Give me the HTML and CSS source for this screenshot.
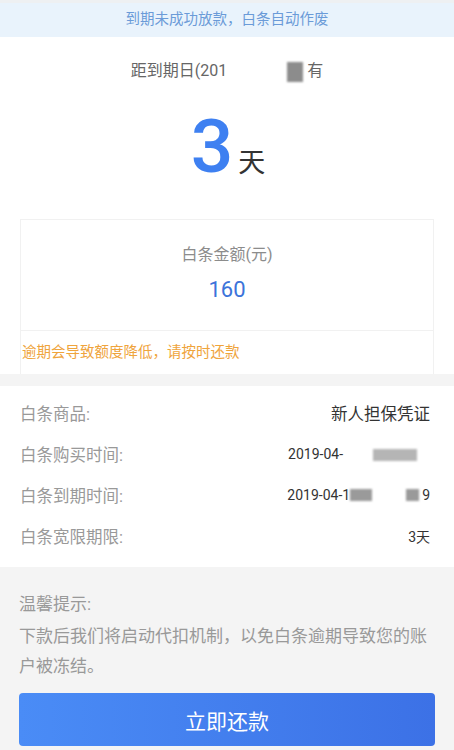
FILE: index.html
```html
<!DOCTYPE html>
<html lang="zh">
<head>
<meta charset="utf-8">
<title>白条详情</title>
<link rel="stylesheet" href="styles.css">
</head>
<body>
<div class="topline"></div>
<div class="banner">到期未成功放款，白条自动作废</div>
<section class="main">
  <div class="due">距到期日(201<span class="redact redact-title"><span class="blk blk-title"></span></span>有</div>
  <div class="days"><span class="num">3</span><span class="unit">天</span></div>
  <div class="card">
    <div class="amount">
      <div class="amount-label">白条金额(元)</div>
      <div class="amount-value">160</div>
    </div>
    <div class="warn">逾期会导致额度降低，请按时还款</div>
  </div>
</section>
<section class="list">
  <div class="row"><span class="label">白条商品:</span><span class="value big">新人担保凭证</span></div>
  <div class="row"><span class="label">白条购买时间:</span><span class="value">2019-04-<span class="redact redact-a"><span class="blk blk-a"></span></span></span></div>
  <div class="row"><span class="label">白条到期时间:</span><span class="value">2019-04-1<span class="redact redact-b"><span class="blk blk-b1"></span><span class="blk blk-b2"></span></span>9</span></div>
  <div class="row"><span class="label">白条宽限期限:</span><span class="value">3天</span></div>
</section>
<section class="tips">
  <div class="tips-title">温馨提示:</div>
  <p class="tips-text">下款后我们将启动代扣机制，以免白条逾期导致您的账户被冻结。</p>
  <button class="pay">立即还款</button>
</section>
</body>
</html>
```
FILE: styles.css
```css
* { box-sizing: border-box; }
body {
  margin: 0;
  background: #f4f4f4;
  font-family: Roboto, "Noto Sans CJK SC", sans-serif;
  color: #333;
}
.topline { height: 3px; background: #eef0f2; }
.banner {
  height: 34px;
  line-height: 34px;
  background: #e9f3fc;
  color: #6b9bd8;
  font-size: 14.5px;
  text-align: center;
}
.main {
  background: #fff;
  padding-top: 22px;
}
.due {
  display: flex;
  justify-content: center;
  align-items: center;
  font-size: 16px;
  line-height: 24px;
  color: #666;
}
.redact {
  position: relative;
  display: inline-block;
  height: 22px;
}
.blk {
  position: absolute;
  background: #9a9a9a;
  filter: blur(1px);
}
.redact-title { width: 80px; }
.blk-title { right: 4px; top: 2px; width: 16px; height: 20px; background: #8c8c8c; }
.days {
  display: flex;
  justify-content: center;
  align-items: baseline;
  margin-top: 25px;
  line-height: 76px;
  height: 76px;
  padding-left: 2px;
}
.num {
  font-size: 75px;
  font-weight: 500;
  color: #3e80f1;
  font-family: Roboto, sans-serif;
}
.unit {
  font-size: 27px;
  color: #333;
  margin-left: 5px;
}
.card {
  margin: 35px 20px 0;
  border: 1px solid #f1f1f1;
  border-bottom: none;
}
.amount {
  text-align: center;
  padding: 23px 0 25px;
  border-bottom: 1px solid #f1f1f1;
}
.amount-label { font-size: 16px; line-height: 24px; color: #8c8c8c; }
.amount-value { margin-top: 8px; font-size: 22px; line-height: 30px; color: #3b73da; }
.warn {
  font-size: 14.5px;
  line-height: 20px;
  color: #efa43c;
  padding: 12px 0 11px 1px;
}
.list {
  margin-top: 12px;
  background: #fff;
  padding: 6px 24px 11px 20px;
}
.row {
  display: flex;
  justify-content: space-between;
  align-items: center;
  height: 41px;
}
.label { font-size: 16.5px; color: #999; }
.value {
  display: flex;
  align-items: center;
  font-size: 14px;
  color: #333;
}
.value.big { font-size: 16.5px; }
.redact-a { width: 87px; }
.blk-a { left: 30px; top: 6px; width: 44px; height: 12px; background: #b5b5b5; }
.redact-b { width: 72px; }
.blk-b1 { left: 0; top: 5px; width: 22px; height: 12px; }
.blk-b2 { left: 56px; top: 5px; width: 13px; height: 12px; }
.tips {
  padding: 22px 19px 0;
}
.tips-title { font-size: 17px; line-height: 30px; color: #999; }
.tips-text {
  margin: 2px 0 0;
  font-size: 17px;
  line-height: 30px;
  color: #999;
}
.pay {
  display: block;
  width: 100%;
  height: 53px;
  margin-top: 12px;
  border: none;
  border-radius: 4px;
  background: linear-gradient(90deg, #4a8cf6, #3c71e6);
  color: #fff;
  font-family: "Noto Sans CJK SC", sans-serif;
  font-size: 21px;
}
```
